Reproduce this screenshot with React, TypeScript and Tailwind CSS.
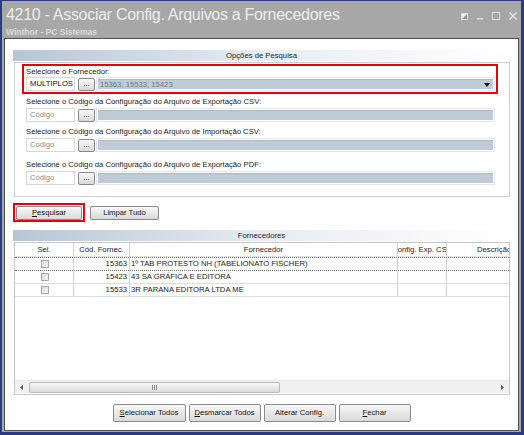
import type React from "react"

// small gray push button used all over the form
function Btn({ children, className = "" }: { children: React.ReactNode; className?: string }) {
  return (
    <div
      className={`flex items-center justify-center rounded-[2px] border border-[#8a8a8a] bg-linear-to-b from-[#f8f8f8] to-[#d9d9d9] text-[#111] ${className}`}
    >
      {children}
    </div>
  )
}

function FieldRow({ value, muted, info, dropdown }: { value: string; muted?: boolean; info?: string; dropdown?: boolean }) {
  return (
    <div className="flex h-[14px] items-center">
      <div
        className={`flex h-[14px] w-[49px] items-center border border-[#d6d6d6] bg-white pl-[3px] ${muted ? "text-[#8c8c8c]" : "text-[#111]"}`}
      >
        {value}
      </div>
      <Btn className="ml-[3px] h-[13px] w-[17px] items-end pb-[2px] leading-none">...</Btn>
      <div className="ml-[1px] h-[14px] flex-1 border border-[#e3e6ea] p-px">
        <div className="flex h-full items-center justify-between border-t border-[#aeb8c4] bg-[#bfcbd7] pl-[2px] pr-[3px] text-[#6e7c8c]">
          <span>{info}</span>
          {dropdown && (
            <svg width="6" height="4" viewBox="0 0 6 4">
              <path d="M0 0h6L3 4z" fill="#111" />
            </svg>
          )}
        </div>
      </div>
    </div>
  )
}

function GroupHeader({ title }: { title: string }) {
  return (
    <div className="flex h-[11px] items-center justify-center bg-linear-to-r from-[#b6c6d6] via-[#e6ecf2] to-white leading-none text-[#222]">
      {title}
    </div>
  )
}

const rows = [
  { code: "15363", name: "1º TAB PROTESTO NH (TABELIONATO FISCHER)", focus: true },
  { code: "15423", name: "43 SA GRÁFICA E EDITORA", focus: false },
  { code: "15533", name: "3R PARANA EDITORA LTDA ME", focus: false },
]

export default function App() {
  return (
    <div className="flex h-[435px] w-[524px] flex-col overflow-hidden border-t border-r-[3px] border-b-[3px] border-l-2 border-[#2c3a86] bg-[#a7a7a7] font-['Liberation_Sans',Arial,sans-serif] text-[7.7px] text-[#1a1a1a]">
      {/* title bar */}
      <div className="flex h-[37px] shrink-0 justify-between pl-[4px]">
        <div className="flex flex-col">
          <div className="mt-[5px] text-[16px] leading-[18px] tracking-[-0.3px] text-[#ececec]">
            4210 - Associar Config. Arquivos a Fornecedores
          </div>
          <div className="mt-[3px] text-[8.5px] leading-[10px] font-bold text-[#dcdcdc]">Winthor - PC Sistemas</div>
        </div>
        <div className="mt-[11px] mr-[4px] flex h-[8px] items-center gap-[9px]">
          <svg width="7" height="7" viewBox="0 0 7 7">
            <rect x="0.5" y="0.5" width="6" height="6" fill="#eeeeee" stroke="#dedede" />
            <path d="M1 6L6 1V6z" fill="#939393" />
          </svg>
          <svg width="6" height="8" viewBox="0 0 6 8">
            <rect x="0" y="6" width="6" height="1.5" fill="#e0e0e0" />
          </svg>
          <svg width="8" height="8" viewBox="0 0 8 8">
            <rect x="0.5" y="0.5" width="7" height="7" fill="none" stroke="#e0e0e0" />
          </svg>
          <svg width="8" height="8" viewBox="0 0 8 8">
            <path d="M0.5 0.5L7.5 7.5M7.5 0.5L0.5 7.5" stroke="#e6e6e6" strokeWidth="1.3" />
          </svg>
        </div>
      </div>

      {/* window body */}
      <div className="mx-[2px] mb-px flex flex-1 flex-col border border-[#4e4e4e] bg-white">
        {/* Opções de Pesquisa */}
        <div className="mt-[11px] ml-[8px] w-[497px]">
          <GroupHeader title="Opções de Pesquisa" />
          <div className="mt-px ml-px h-[135px] w-[496px] border border-[#cdcdcd]">
            <div className="mt-px ml-[7px] w-[476px] border-2 border-[#e8000b] pr-px pb-px pl-[2px]">
              <div className="h-[11px] pt-px leading-[10px]">Selecione o Fornecedor:</div>
              <FieldRow value="MULTIPLOS" info="15363, 15533, 15423" dropdown />
            </div>
            <div className="pr-[14px] pl-[11px]">
              <div className="mt-px h-[13px] leading-[13px]">
                Selecione o Código da Configuração do Arquivo de Exportação CSV:
              </div>
              <FieldRow value="Código" muted />
              <div className="mt-[3px] h-[13px] leading-[13px]">
                Selecione o Código da Configuração do Arquivo de Importação CSV:
              </div>
              <FieldRow value="Código" muted />
              <div className="mt-[6px] h-[13px] leading-[13px]">
                Selecione o Código da Configuração do Arquivo de Exportação PDF:
              </div>
              <FieldRow value="Código" muted />
            </div>
          </div>
        </div>

        {/* search buttons */}
        <div className="mt-[6px] ml-[8px] flex items-start">
          <div className="h-[19px] w-[72px] border-2 border-[#e8000b] p-px">
            <Btn className="h-[14px] w-full">
              <span>
                <span className="underline">P</span>esquisar
              </span>
            </Btn>
          </div>
          <Btn className="mt-[3px] ml-[5px] h-[14px] w-[69px]">Limpar Tudo</Btn>
        </div>

        {/* Fornecedores */}
        <div className="mt-[8px] ml-[8px] w-[497px]">
          <GroupHeader title="Fornecedores" />
          <div className="mt-px ml-px flex h-[153px] w-[496px] flex-col border border-[#c6c6c6]">
            <div className="flex h-[14px] border-b border-[#e2e2e2] text-[#222]">
              <div className="flex w-[59px] items-center justify-center border-r border-[#d0d0d0]">Sel.</div>
              <div className="flex w-[56px] items-center justify-center border-r border-[#d0d0d0]">Cód. Fornec.</div>
              <div className="flex w-[268px] items-center justify-center border-r border-[#d0d0d0]">Fornecedor</div>
              <div className="flex w-[49px] items-center justify-center overflow-hidden border-r border-[#d0d0d0] whitespace-nowrap">
                Config. Exp. CSV
              </div>
              <div className="flex flex-1 items-center overflow-hidden pl-[30px] whitespace-nowrap">Descrição</div>
            </div>
            {rows.map((r) => (
              <div
                key={r.code}
                className={`flex h-[13px] ${r.focus ? "h-[14px] border-y border-dotted border-[#6a6a6a]" : "border-b border-[#dcdcdc]"}`}
              >
                <div className="flex w-[59px] items-center justify-center border-r border-[#d0d0d0]">
                  <div className="ml-px h-[8px] w-[8px] border border-[#a8a8a8] bg-linear-to-br from-[#dcdcdc] to-[#f4f4f4]" />
                </div>
                <div className="flex w-[56px] items-center justify-end border-r border-[#d0d0d0] pr-[2px]">{r.code}</div>
                <div className="flex w-[268px] items-center border-r border-[#d0d0d0] pl-px whitespace-nowrap">{r.name}</div>
                <div className="w-[49px] border-r border-[#d0d0d0]" />
                <div className="flex-1" />
              </div>
            ))}
            <div className="flex-1" />
            {/* horizontal scrollbar */}
            <div className="mb-px flex h-[13px] items-center border-t border-[#e6e6e6] bg-[#f0f0f0]">
              <div className="flex w-[13px] justify-center">
                <svg width="3" height="5" viewBox="0 0 3 5">
                  <path d="M3 0V5L0 2.5z" fill="#555" />
                </svg>
              </div>
              <div className="ml-px flex h-[11px] w-[251px] items-center justify-center rounded-[2px] border border-[#b9b9b9] bg-linear-to-b from-[#f6f6f6] to-[#dadada]">
                <svg width="6" height="5" viewBox="0 0 6 5">
                  <path d="M0.5 0v5M2.5 0v5M4.5 0v5" stroke="#8a8a8a" />
                </svg>
              </div>
              <div className="flex-1" />
              <div className="flex w-[13px] justify-center">
                <svg width="3" height="5" viewBox="0 0 3 5">
                  <path d="M0 0V5L3 2.5z" fill="#555" />
                </svg>
              </div>
            </div>
          </div>
        </div>

        {/* bottom buttons */}
        <div className="mt-[9px] flex justify-center gap-[3px]">
          <Btn className="h-[18px] w-[73px]">
            <span>
              <span className="underline">S</span>elecionar Todos
            </span>
          </Btn>
          <Btn className="h-[18px] w-[72px]">
            <span>
              <span className="underline">D</span>esmarcar Todos
            </span>
          </Btn>
          <Btn className="h-[18px] w-[72px]">Alterar Config.</Btn>
          <Btn className="h-[18px] w-[72px]">
            <span>
              <span className="underline">F</span>echar
            </span>
          </Btn>
        </div>
      </div>
    </div>
  )
}
